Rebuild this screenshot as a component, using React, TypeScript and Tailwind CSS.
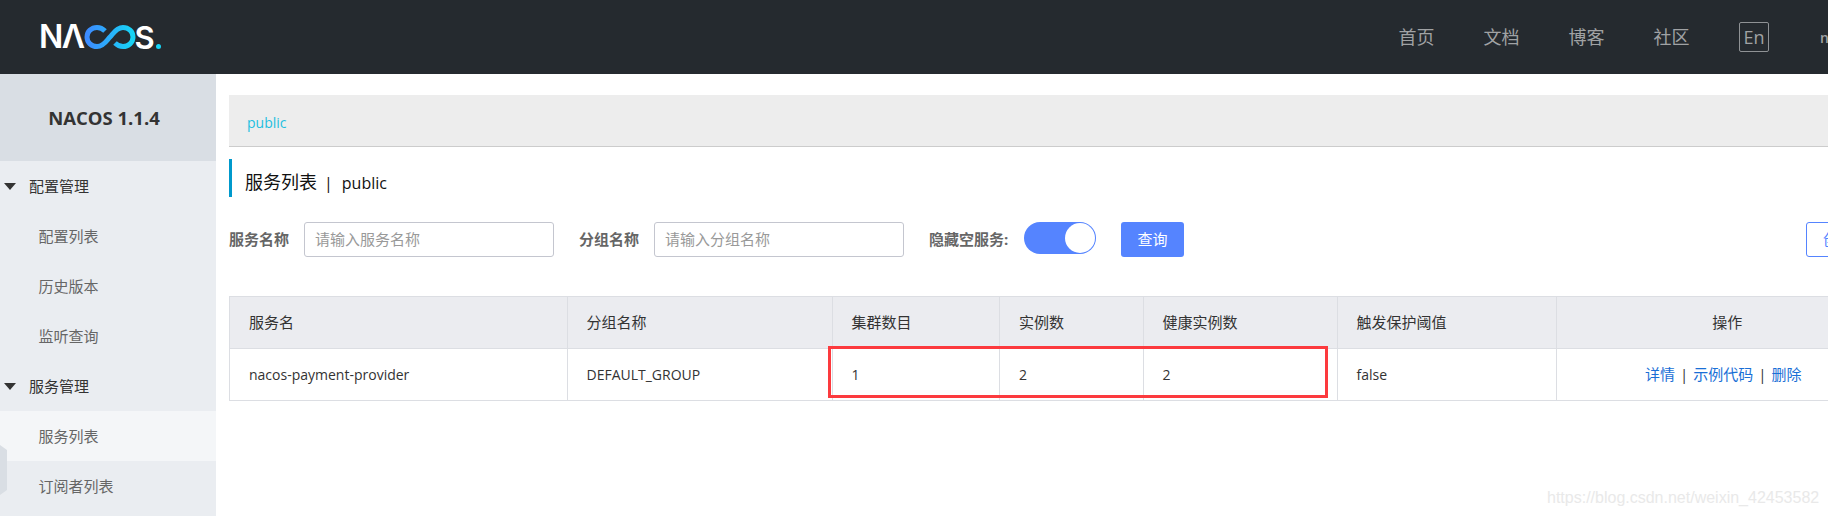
const font = "font-['Open_Sans','Noto_Sans_CJK_SC',sans-serif]";

function Logo() {
  return (
    <div className="flex items-center h-[40px] text-white font-['Inter','Noto_Sans',sans-serif] font-semibold text-[32px] leading-none select-none">
      <span className="tracking-[-1.5px]">NΛ</span>
      <svg width="52" height="24" viewBox="0 0 52 24" className="shrink-0" aria-hidden="true">
        <defs>
          <linearGradient id="nacosInf" x1="0" y1="0" x2="1" y2="0">
            <stop offset="0" stopColor="#3d8bff" />
            <stop offset="1" stopColor="#16d4f5" />
          </linearGradient>
        </defs>
        <path
          d="M21 6C19 4 16 2.500 13 2.500 7.500 2.500 3 6.500 3 12S7.500 21.500 13 21.500C20 21.500 23 15 26 12 29 9 32 2.500 39 2.500 44.500 2.500 49 6.500 49 12S44.500 21.500 39 21.500C36 21.500 33 20 31 18"
          fill="none"
          stroke="url(#nacosInf)"
          strokeWidth="5"
        />
      </svg>
      <span className="-ml-[1px] text-[31px]">S</span>
      <span className="ml-[1px] mt-[18px] w-[5px] h-[5px] rounded-full bg-[#16d4f5]" />
    </div>
  );
}

const navItems = ["首页", "文档", "博客", "社区"];

function Header() {
  return (
    <header className="h-[74px] shrink-0 bg-[#252a2f] flex items-center pl-[39px] relative overflow-hidden">
      <Logo />
      <nav className="ml-auto flex items-center text-[18px] text-[#a0a2a4]">
        {navItems.map((n) => (
          <span key={n} className="w-[85px] text-center">{n}</span>
        ))}
        <span className="ml-[25px] w-[30px] h-[30px] border border-[#8f9295] rounded-[2px] flex items-center justify-center leading-none">En</span>
        <span className="ml-[51px] w-[8px] overflow-hidden text-[14px] font-semibold text-[#a0a2a4]">nacos</span>
      </nav>
    </header>
  );
}

function Sidebar() {
  const Group = ({ t }: { t: string }) => (
    <div className="h-[50px] flex items-center text-[15px] text-[#333333]">
      <span className="ml-[4px] w-0 h-0 border-x-[6px] border-x-transparent border-t-[7px] border-t-[#333333]" />
      <span className="ml-[13px]">{t}</span>
    </div>
  );
  const Item = ({ t, active }: { t: string; active?: boolean }) => (
    <div className={`h-[50px] flex items-center pl-[38.500px] text-[15px] text-[#666666] ${active ? "bg-[#f4f6f8]" : ""}`}>{t}</div>
  );
  return (
    <aside className="w-[216px] shrink-0 bg-[#eaedf1] relative">
      <div className="h-[87px] bg-[#d9dee4] flex items-center justify-center pr-[8px] text-[18.500px] font-bold text-[#333333]">NACOS 1.1.4</div>
      <Group t="配置管理" />
      <Item t="配置列表" />
      <Item t="历史版本" />
      <Item t="监听查询" />
      <Group t="服务管理" />
      <Item t="服务列表" active />
      <Item t="订阅者列表" />
      <div className="absolute left-0 top-[371px] w-[7px] h-[50px] bg-[#d9dee4] [clip-path:polygon(0_0,100%_10%,100%_90%,0_100%)]" />
    </aside>
  );
}

const cols = [
  { t: "服务名", v: "nacos-payment-provider", w: "w-[337.500px]" },
  { t: "分组名称", v: "DEFAULT_GROUP", w: "w-[265px]" },
  { t: "集群数目", v: "1", w: "w-[167.500px]" },
  { t: "实例数", v: "2", w: "w-[143.500px]" },
  { t: "健康实例数", v: "2", w: "w-[194px]" },
  { t: "触发保护阈值", v: "false", w: "w-[219px]" },
];

function ServiceTable() {
  return (
    <div className="relative mt-[39px] w-[1670px]">
      <table className="table-fixed w-full border-collapse text-[14px] text-[#333333]">
        <thead>
          <tr className="h-[52px] bg-[#ebecf0]">
            {cols.map((c) => (
              <th key={c.t} className={`${c.w} border-[1.500px] border-[#dcdee3] pl-[19px] text-left text-[15px] font-normal`}>{c.t}</th>
            ))}
            <th className="border-[1.500px] border-[#dcdee3] text-center text-[15px] font-normal">操作</th>
          </tr>
        </thead>
        <tbody>
          <tr className="h-[52px]">
            {cols.map((c) => (
              <td key={c.t} className="border-[1.500px] border-[#dcdee3] pl-[19px]">{c.v}</td>
            ))}
            <td className="border-[1.500px] border-[#dcdee3] text-center text-[15px] pr-[8px]">
              <span className="text-[#1a6fd6]">详情</span>
              <span className="mx-[5px]">|</span>
              <span className="text-[#1a6fd6]">示例代码</span>
              <span className="mx-[5px]">|</span>
              <span className="text-[#1a6fd6]">删除</span>
            </td>
          </tr>
        </tbody>
      </table>
      <div className="absolute left-[599px] top-[50px] w-[500px] h-[52px] border-[3px] border-[#fc3a3e]" />
    </div>
  );
}

export default function App() {
  return (
    <div className={`relative w-[1828px] h-[516px] overflow-hidden flex flex-col bg-white ${font}`}>
      <Header />
      <div className="flex flex-1 min-h-0">
        <Sidebar />
        <main className="flex-1 min-w-0 pl-[13px] pt-[21px] overflow-hidden relative">
          <div className="h-[52px] bg-[#ededed] border-b-[1.500px] border-[#cccccc] flex items-center pl-[18px] pt-[3px] text-[14px] text-[#1ebfe0]">public</div>
          <div className="mt-[12px] h-[38px] border-l-[3px] border-[#0099cc] pl-[13px] pt-[9px] flex items-center text-[18px] text-[#111111]">
            <span>服务列表</span>
            <span className="ml-[7px] text-[16px]">|</span>
            <span className="ml-[9px] text-[16px]">public</span>
          </div>
          <div className="mt-[25px] h-[35px] flex items-start text-[15px]">
            <span className="shrink-0 w-[75px] h-[35px] flex items-center font-bold text-[#666666]">服务名称</span>
            <div className="shrink-0 w-[250px] h-[35px] border border-[#c4c6cf] rounded-[3px] pl-[10px] flex items-center text-[#999999]">请输入服务名称</div>
            <span className="shrink-0 ml-[25px] w-[75px] h-[35px] flex items-center font-bold text-[#666666]">分组名称</span>
            <div className="shrink-0 w-[250px] h-[35px] border border-[#c4c6cf] rounded-[3px] pl-[10px] flex items-center text-[#999999]">请输入分组名称</div>
            <span className="shrink-0 ml-[25px] w-[95px] h-[35px] flex items-center font-bold text-[#666666]">隐藏空服务:</span>
            <div className="shrink-0 w-[72px] h-[32px] rounded-full bg-[#5584ff] relative">
              <span className="absolute right-[1px] top-[1px] w-[30px] h-[30px] rounded-full bg-white" />
            </div>
            <button className="shrink-0 ml-[25px] w-[63px] h-[35px] rounded-[3px] bg-[#5584ff] text-white">查询</button>
            <button className="shrink-0 ml-[622px] w-[90px] h-[35px] rounded-[3px] border border-[#5584ff] text-[#5584ff] bg-white pl-[16px] text-left whitespace-nowrap">创建服务</button>
          </div>
          <ServiceTable />
        </main>
      </div>
      <span className="absolute left-[1547px] top-[488px] font-['Liberation_Sans',sans-serif] text-[16px] leading-[20px] text-[#e9e9e9] whitespace-nowrap">https://blog.csdn.net/weixin_42453582</span>
    </div>
  );
}
